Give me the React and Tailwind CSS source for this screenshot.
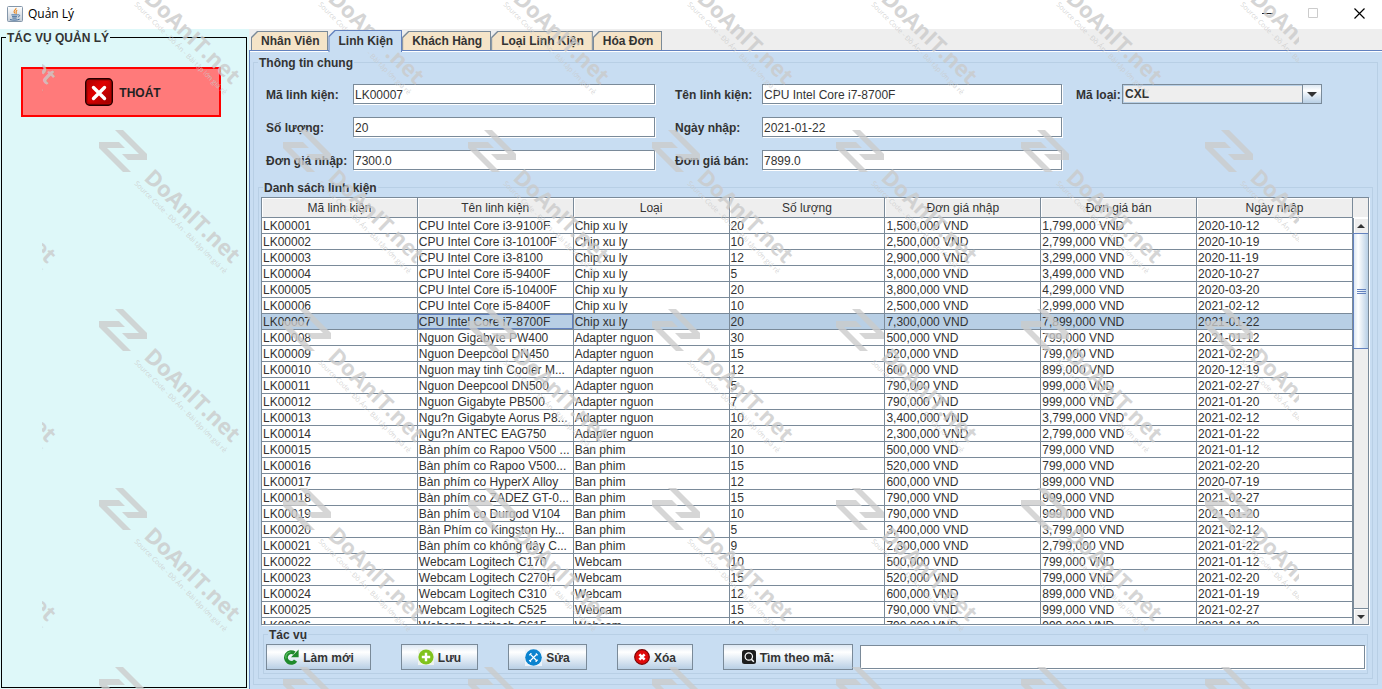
import { useState } from 'react';

const tabs = ['Nhân Viên', 'Linh Kiện', 'Khách Hàng', 'Loại Linh Kiện', 'Hóa Đơn'];

const columns = ['Mã linh kiện', 'Tên linh kiện', 'Loại', 'Số lượng', 'Đơn giá nhập', 'Đơn giá bán', 'Ngày nhập'];

const parts = [
  ['LK00001', 'CPU Intel Core i3-9100F', 'Chip xu ly', '20', '1,500,000 VND', '1,799,000 VND', '2020-10-12'],
  ['LK00002', 'CPU Intel Core i3-10100F', 'Chip xu ly', '10', '2,500,000 VND', '2,799,000 VND', '2020-10-19'],
  ['LK00003', 'CPU Intel Core i3-8100', 'Chip xu ly', '12', '2,900,000 VND', '3,299,000 VND', '2020-11-19'],
  ['LK00004', 'CPU Intel Core i5-9400F', 'Chip xu ly', '5', '3,000,000 VND', '3,499,000 VND', '2020-10-27'],
  ['LK00005', 'CPU Intel Core i5-10400F', 'Chip xu ly', '20', '3,800,000 VND', '4,299,000 VND', '2020-03-20'],
  ['LK00006', 'CPU Intel Core i5-8400F', 'Chip xu ly', '10', '2,500,000 VND', '2,999,000 VND', '2021-02-12'],
  ['LK00007', 'CPU Intel Core i7-8700F', 'Chip xu ly', '20', '7,300,000 VND', '7,899,000 VND', '2021-01-22'],
  ['LK00008', 'Nguon Gigabyte PW400', 'Adapter nguon', '30', '500,000 VND', '799,000 VND', '2021-01-12'],
  ['LK00009', 'Nguon Deepcool DN450', 'Adapter nguon', '15', '520,000 VND', '799,000 VND', '2021-02-20'],
  ['LK00010', 'Nguon may tinh Cooler M...', 'Adapter nguon', '12', '600,000 VND', '899,000 VND', '2020-12-19'],
  ['LK00011', 'Nguon Deepcool DN500', 'Adapter nguon', '5', '790,000 VND', '999,000 VND', '2021-02-27'],
  ['LK00012', 'Nguon Gigabyte PB500', 'Adapter nguon', '7', '790,000 VND', '999,000 VND', '2021-01-20'],
  ['LK00013', 'Ngu?n Gigabyte Aorus P8...', 'Adapter nguon', '10', '3,400,000 VND', '3,799,000 VND', '2021-02-12'],
  ['LK00014', 'Ngu?n ANTEC EAG750', 'Adapter nguon', '20', '2,300,000 VND', '2,799,000 VND', '2021-01-22'],
  ['LK00015', 'Bàn phím co Rapoo V500 ...', 'Ban phim', '10', '500,000 VND', '799,000 VND', '2021-01-12'],
  ['LK00016', 'Bàn phím co Rapoo V500...', 'Ban phim', '15', '520,000 VND', '799,000 VND', '2021-02-20'],
  ['LK00017', 'Bàn phím co HyperX Alloy', 'Ban phim', '12', '600,000 VND', '899,000 VND', '2020-07-19'],
  ['LK00018', 'Bàn phím co ZADEZ GT-0...', 'Ban phim', '15', '790,000 VND', '999,000 VND', '2021-02-27'],
  ['LK00019', 'Bàn phím co Durgod V104', 'Ban phim', '10', '790,000 VND', '999,000 VND', '2021-01-20'],
  ['LK00020', 'Bàn Phím co Kingston Hy...', 'Ban phim', '5', '3,400,000 VND', '3,799,000 VND', '2021-02-12'],
  ['LK00021', 'Bàn phím co không dây C...', 'Ban phim', '9', '2,300,000 VND', '2,799,000 VND', '2021-01-22'],
  ['LK00022', 'Webcam Logitech C170', 'Webcam', '10', '500,000 VND', '799,000 VND', '2021-01-12'],
  ['LK00023', 'Webcam Logitech C270H', 'Webcam', '15', '520,000 VND', '799,000 VND', '2021-02-20'],
  ['LK00024', 'Webcam Logitech C310', 'Webcam', '12', '600,000 VND', '899,000 VND', '2021-01-19'],
  ['LK00025', 'Webcam Logitech C525', 'Webcam', '15', '790,000 VND', '999,000 VND', '2021-02-27'],
  ['LK00026', 'Webcam Logitech C615', 'Webcam', '10', '790,000 VND', '999,000 VND', '2021-01-20']
];

const JavaIcon = () => (
  <svg className="h-4 w-4" viewBox="0 0 16 16" aria-hidden="true">
    <defs>
      <linearGradient id="java-bg" x1="0" y1="0" x2="0" y2="1">
        <stop offset="0" stopColor="#ffffff" />
        <stop offset="1" stopColor="#c3ccd6" />
      </linearGradient>
    </defs>
    <rect x="0.5" y="0.5" width="15" height="15" rx="1" fill="url(#java-bg)" stroke="#8497ab" />
    <path d="M9 2c.6 1.6-2.6 2.3-1.9 4 .2.6.8.9.8 1.6M10.2 4.2C8.6 5 8.8 5.8 9.2 6.6c.2.5 0 .9-.3 1.2" fill="none" stroke="#e8861e" strokeWidth="1.1" />
    <path d="M4.4 8.9h6.4M5 10.7h5M5.4 12.1h4.2M3 13.6c2.5.8 7.6.7 9.6-.4M11.2 8.8c2-.3 2 1.8-.4 2.2" fill="none" stroke="#3f6c9c" strokeWidth="1" />
  </svg>
);

const ExitIcon = () => (
  <svg className="h-7 w-7" viewBox="0 0 28 28" aria-hidden="true">
    <defs>
      <linearGradient id="exit-bg" x1="0" y1="0" x2="1" y2="1">
        <stop offset="0" stopColor="#b00000" />
        <stop offset="0.4" stopColor="#e00000" />
        <stop offset="1" stopColor="#a00000" />
      </linearGradient>
    </defs>
    <rect x="0.7" y="0.7" width="26.6" height="26.6" rx="4" fill="#b40000" stroke="#240000" strokeWidth="1.4" />
    <rect x="3" y="3" width="22" height="22" rx="2" fill="url(#exit-bg)" />
    <path d="M8.5 9.5l11 11M19.5 9.5l-11 11" stroke="#fff" strokeWidth="3.4" strokeLinecap="round" />
  </svg>
);

const RefreshIcon = () => (
  <svg className="h-4 w-4" viewBox="0 0 16 16" aria-hidden="true">
    <path d="M12.6 11.6A5.3 5.3 0 1 1 11.4 4.200" fill="none" stroke="#1f8a2c" strokeWidth="4" />
    <path d="M3 9.500A5 5 0 0 1 7.500 3" fill="none" stroke="#5cbf63" strokeWidth="1.200" />
    <path d="M15.6 0.6v7.6H8z" fill="#1f8a2c" />
  </svg>
);

const AddIcon = () => (
  <svg className="h-4 w-4 bg-[#eef3ee]" viewBox="0 0 16 16" aria-hidden="true">
    <circle cx="8" cy="8" r="7.6" fill="#80c31c" />
    <path d="M8 3.8v8.4M3.8 8h8.4" stroke="#fff" strokeWidth="2.4" />
  </svg>
);

const EditIcon = () => (
  <svg className="h-[17px] w-[17px] bg-[#edf3f9]" viewBox="0 0 17 17" aria-hidden="true">
    <circle cx="8.5" cy="8.5" r="8.3" fill="#0b83cf" />
    <path d="M5.4 5.4l6.6 6.6M11.8 5.2l-6.7 6.7" stroke="#fff" strokeWidth="1.3" />
    <path d="M4 6a2 2 0 0 0 2-2M11 13a2 2 0 0 1 2-2M11.2 4.2a2 2 0 0 0 1.8 1.8M4.2 11.2l1.7 1.7" fill="none" stroke="#fff" strokeWidth="1.2" />
  </svg>
);

const DeleteIcon = () => (
  <svg className="h-4 w-4" viewBox="0 0 16 16" aria-hidden="true">
    <circle cx="8" cy="8" r="7.3" fill="#e00a0a" stroke="#7c0505" strokeWidth="1.2" />
    <path d="M5.4 5.4l5.2 5.2M10.6 5.4l-5.2 5.2" stroke="#fff" strokeWidth="2.6" />
  </svg>
);

const SearchIcon = () => (
  <svg className="h-[14px] w-[14px]" viewBox="0 0 14 14" aria-hidden="true">
    <rect width="14" height="14" rx="2.5" fill="#1d1d1d" />
    <circle cx="6.8" cy="6.5" r="3.7" fill="none" stroke="#fff" strokeWidth="1.2" />
    <path d="M9.4 9.2l2.4 2.6" stroke="#fff" strokeWidth="1.5" />
  </svg>
);

const TextField = ({ id, label, labelClass = '', value }) => (
  <>
    <label htmlFor={id} className={`pt-0.5 whitespace-nowrap ${labelClass}`}>{label}</label>
    <input
      id={id}
      type="text"
      defaultValue={value}
      className="h-5 w-full min-w-0 border border-[#7a8a99] bg-white px-px pt-0.5 font-normal shadow-[1px_1px_0_#fff] outline-none"
    />
  </>
);

const ActionButton = ({ icon, children, className }) => (
  <button
    type="button"
    className={`flex h-[26px] shrink-0 items-center justify-center gap-1 border border-[#7a8a99] bg-linear-to-b from-[#dde8f3] via-white via-30% to-[#b8cfe5] font-bold whitespace-nowrap ${className}`}
  >
    {icon}
    <span className="pt-0.5">{children}</span>
  </button>
);

const InfoForm = () => (
  <div className="grid grid-cols-[87px_minmax(0,302fr)_107px_minmax(0,300fr)_60px_minmax(0,200fr)] items-center gap-y-[13px] pt-[14px] pr-[51px] pl-[11px] font-bold">
    <TextField id="ma" label="Mã linh kiện:" value="LK00007" />
    <TextField id="ten" label="Tên linh kiện:" labelClass="pl-5" value="CPU Intel Core i7-8700F" />
    <label htmlFor="loai" className="pt-0.5 pl-[14px] whitespace-nowrap">Mã loại:</label>
    <div className="relative">
      <select
        id="loai"
        className="block h-5 w-full appearance-none border border-[#7a8a99] bg-[#eee] pr-5 pl-0.5 leading-4 font-bold shadow-[inset_0_0_0_1px_#b8cfe5] outline-none"
      >
        <option>CXL</option>
      </select>
      <span className="pointer-events-none absolute inset-y-0 right-0 flex w-5 items-center justify-center border border-[#7a8a99] bg-linear-to-b from-[#dde8f3] via-white via-30% to-[#b8cfe5]">
        <svg className="h-[5px] w-[10px]" viewBox="0 0 10 5" aria-hidden="true">
          <path d="M0 0h10L5 5z" fill="#333" />
        </svg>
      </span>
    </div>
    <TextField id="soluong" label="Số lượng:" value="20" />
    <TextField id="ngaynhap" label="Ngày nhập:" labelClass="pl-5" value="2021-01-22" />
    <TextField id="gianhap" label="Đơn giá nhập:" labelClass="col-start-1" value="7300.0" />
    <TextField id="giaban" label="Đơn giá bán:" labelClass="pl-5" value="7899.0" />
  </div>
);

const PartsTable = () => {
  const [selected, setSelected] = useState('LK00007');

  return (
    <div className="mr-[3px] ml-0.5 flex min-h-0 flex-1 overflow-hidden border border-[#7a8a99] bg-white shadow-[1px_1px_0_#fff]">
      <div className="min-w-0 flex-1 overflow-hidden">
        <table className="w-full table-fixed border-separate border-spacing-0">
          <thead>
            <tr>
              {columns.map(col => (
                <th key={col} className="h-5 border-r border-b border-[#7a8a99] bg-[#eee] px-0 pt-0.5 pb-0 font-normal shadow-[inset_1px_1px_0_#fff]">
                  {col}
                </th>
              ))}
            </tr>
          </thead>
          <tbody>
            {parts.map(row => (
              <tr
                key={row[0]}
                onClick={() => setSelected(row[0])}
                className={row[0] === selected ? 'bg-[#b8cfe5]' : 'bg-white'}
              >
                {row.map((cell, i) => (
                  <td
                    key={i}
                    className={`h-4 overflow-hidden border-r border-b border-[#7a8a99] px-px pt-0.5 pb-0 leading-[13px] whitespace-nowrap ${
                      row[0] === selected && i === 1 ? 'shadow-[inset_0_0_0_1px_#6382bf]' : ''
                    }`}
                  >
                    {cell}
                  </td>
                ))}
              </tr>
            ))}
          </tbody>
        </table>
      </div>
      {/* Scrollbar */}
      <div className="flex w-[15px] shrink-0 flex-col bg-[#eee]">
        <div className="h-5 shrink-0 border-b border-white" />
        <div className="flex min-h-0 flex-1 flex-col border-l border-[#7a8a99]">
          <button type="button" aria-label="Cuộn lên" className="flex h-[15px] shrink-0 items-center justify-center shadow-[inset_1px_1px_0_#fff]">
            <svg className="h-1 w-2" viewBox="0 0 8 4" aria-hidden="true"><path d="M0 4h8L4 0z" fill="#333" /></svg>
          </button>
          <div className="-ml-px flex h-[116px] shrink-0 flex-col items-center justify-center gap-px border border-r-0 border-[#6382bf] bg-linear-to-r from-[#dde8f3] via-white via-30% to-[#b8cfe5]">
            <span className="h-px w-[9px] bg-[#6382bf]" />
            <span className="h-px w-[9px] bg-[#6382bf]" />
            <span className="h-px w-[9px] bg-[#6382bf]" />
          </div>
          <div className="flex-1" />
          <button type="button" aria-label="Cuộn xuống" className="flex h-4 shrink-0 items-center justify-center border-t border-[#7a8a99] shadow-[inset_1px_1px_0_#fff]">
            <svg className="h-1 w-2" viewBox="0 0 8 4" aria-hidden="true"><path d="M0 0h8L4 4z" fill="#333" /></svg>
          </button>
        </div>
      </div>
    </div>
  );
};

const Watermark = () => {
  const xs = [-86, 98, 282, 467, 651, 835, 1020, 1204];
  const ys = [-49, 130, 309, 488, 667];

  return (
    <div className="pointer-events-none absolute inset-y-0 right-[83px] left-[42px] overflow-hidden" aria-hidden="true">
      <svg className="h-full w-full" fill="#cacaca" fillOpacity="0.78">
        {ys.map(y => xs.map(x => (
          <g key={`${x}-${y}`} transform={`translate(${x - 42} ${y})`}>
            <path d="M17 0h8l24 24v6H30l-6-6h17zM1 12h20l6 6H9l24 24h-8L1 18z" />
            <text transform="translate(45 49) rotate(44)" className="font-['Open_Sans',sans-serif] text-[22px] font-bold">
              DoAnIT.net
            </text>
            <text transform="translate(36 54) rotate(45)" className="font-['Open_Sans',sans-serif] text-[7px]">
              Source Code - Đồ Án - Bài tập lớn giá rẻ
            </text>
          </g>
        )))}
      </svg>
    </div>
  );
};

const App = () => {
  const [tab, setTab] = useState('Linh Kiện');

  return (
    <div className="relative flex h-screen flex-col overflow-hidden bg-white font-['Liberation_Sans',Arial,sans-serif] text-[12px] leading-[15px] text-[#333]">
      {/* Title bar */}
      <header className="flex h-[29px] shrink-0 items-center pr-[17px] pb-0.5 pl-[7px] text-black">
        <JavaIcon />
        <h1 className="ml-[5px] flex-1 font-['Open_Sans',sans-serif]">Quản Lý</h1>
        <div className="flex items-center gap-[35px]">
          <button type="button" aria-label="Thu nhỏ">
            <svg className="h-[11px] w-[11px]" viewBox="0 0 11 11"><path d="M0 5.5h11" stroke="#222" /></svg>
          </button>
          <button type="button" aria-label="Phóng to" disabled>
            <svg className="h-[11px] w-[11px]" viewBox="0 0 11 11"><path d="M.5.5h9v9h-9z" fill="none" stroke="#ccc" /></svg>
          </button>
          <button type="button" aria-label="Đóng">
            <svg className="h-[11px] w-[11px]" viewBox="0 0 11 11"><path d="M.5.5l10 10M10.5.5l-10 10" stroke="#000" strokeWidth="1.2" /></svg>
          </button>
        </div>
      </header>

      <div className="flex min-h-0 flex-1">
        {/* Left menu */}
        <aside className="flex w-[249px] shrink-0 flex-col bg-[#def8f9] pt-px pr-0.5 pb-px pl-px">
          <fieldset className="min-h-0 flex-1 border border-black px-[19px]">
            <legend className="-ml-[15px] px-px pt-0.5 leading-[13px] font-bold">TÁC VỤ QUẢN LÝ</legend>
            <button
              type="button"
              className="mt-[22px] flex h-[50px] w-[200px] items-center justify-center gap-1.5 border-2 border-[#f00] bg-[#ff7a7a] pl-1 font-bold text-[#222]"
            >
              <ExitIcon />
              <span className="pt-0.5">THOÁT</span>
            </button>
          </fieldset>
        </aside>

        <main className="flex min-w-0 flex-1 flex-col bg-[#eee]">
          <nav className="flex h-[21px] shrink-0 items-end pl-0.5">
            {tabs.map(name => (
              <button
                key={name}
                type="button"
                onClick={() => setTab(name)}
                className={`flex p-px pb-0 font-bold [clip-path:polygon(6px_0,100%_0,100%_100%,0_100%,0_6px)] ${
                  name === tab ? 'z-10 -mb-0.5 h-[22px] bg-[#6382bf]' : 'h-[19px] bg-[#7a8a99]'
                }`}
              >
                <span
                  className={`flex h-full items-center pr-2 pl-[9px] [clip-path:polygon(6px_0,100%_0,100%_100%,0_100%,0_6px)] ${
                    name === tab ? 'bg-[#c8ddf2]' : 'bg-[#f5e4c8]'
                  }`}
                >
                  {name}
                </span>
              </button>
            ))}
          </nav>
          <div className="flex min-h-0 flex-1 flex-col border-t border-l border-[#6382bf] bg-[#c8ddf2] pt-1 pr-1 pb-1 pl-[3px] shadow-[inset_0_1px_0_#fff]">
            <fieldset className="flex min-h-0 flex-1 flex-col border border-[#b8cfe5] pr-1 pb-[5px] pl-1">
              <legend className="px-px pt-0.5 leading-[13px] font-bold">Thông tin chung</legend>
              <div className="-ml-1 shrink-0 pl-px">
                <InfoForm />
              </div>
              <fieldset className="mt-[10px] flex min-h-0 flex-1 flex-col border border-[#b8cfe5] pt-0.5 pb-1">
                <legend className="ml-1 px-px pt-0.5 leading-[13px] font-bold">Danh sách linh kiện</legend>
                <PartsTable />
                <fieldset className="mx-1 mt-0.5 shrink-0 border border-[#b8cfe5] px-0.5 pt-0.5 pb-[3px]">
                  <legend className="ml-0.5 px-px pt-0.5 leading-[13px] font-bold">Tác vụ</legend>
                  <div className="flex items-center gap-[30px]">
                    <ActionButton icon={<RefreshIcon />} className="w-[105px]">Làm mới</ActionButton>
                    <ActionButton icon={<AddIcon />} className="w-[77px]">Lưu</ActionButton>
                    <ActionButton icon={<EditIcon />} className="w-[79px]">Sửa</ActionButton>
                    <ActionButton icon={<DeleteIcon />} className="w-[76px]">Xóa</ActionButton>
                    <div className="flex min-w-0 flex-1 items-center gap-[7px]">
                      <ActionButton icon={<SearchIcon />} className="w-[130px]">Tìm theo mã:</ActionButton>
                      <input
                        type="text"
                        aria-label="Tìm theo mã"
                        className="h-6 min-w-0 flex-1 border border-[#7a8a99] bg-white px-px shadow-[1px_1px_0_#fff] outline-none"
                      />
                    </div>
                  </div>
                </fieldset>
              </fieldset>
            </fieldset>
          </div>
        </main>
      </div>

      <Watermark />
    </div>
  );
};

export default App;
